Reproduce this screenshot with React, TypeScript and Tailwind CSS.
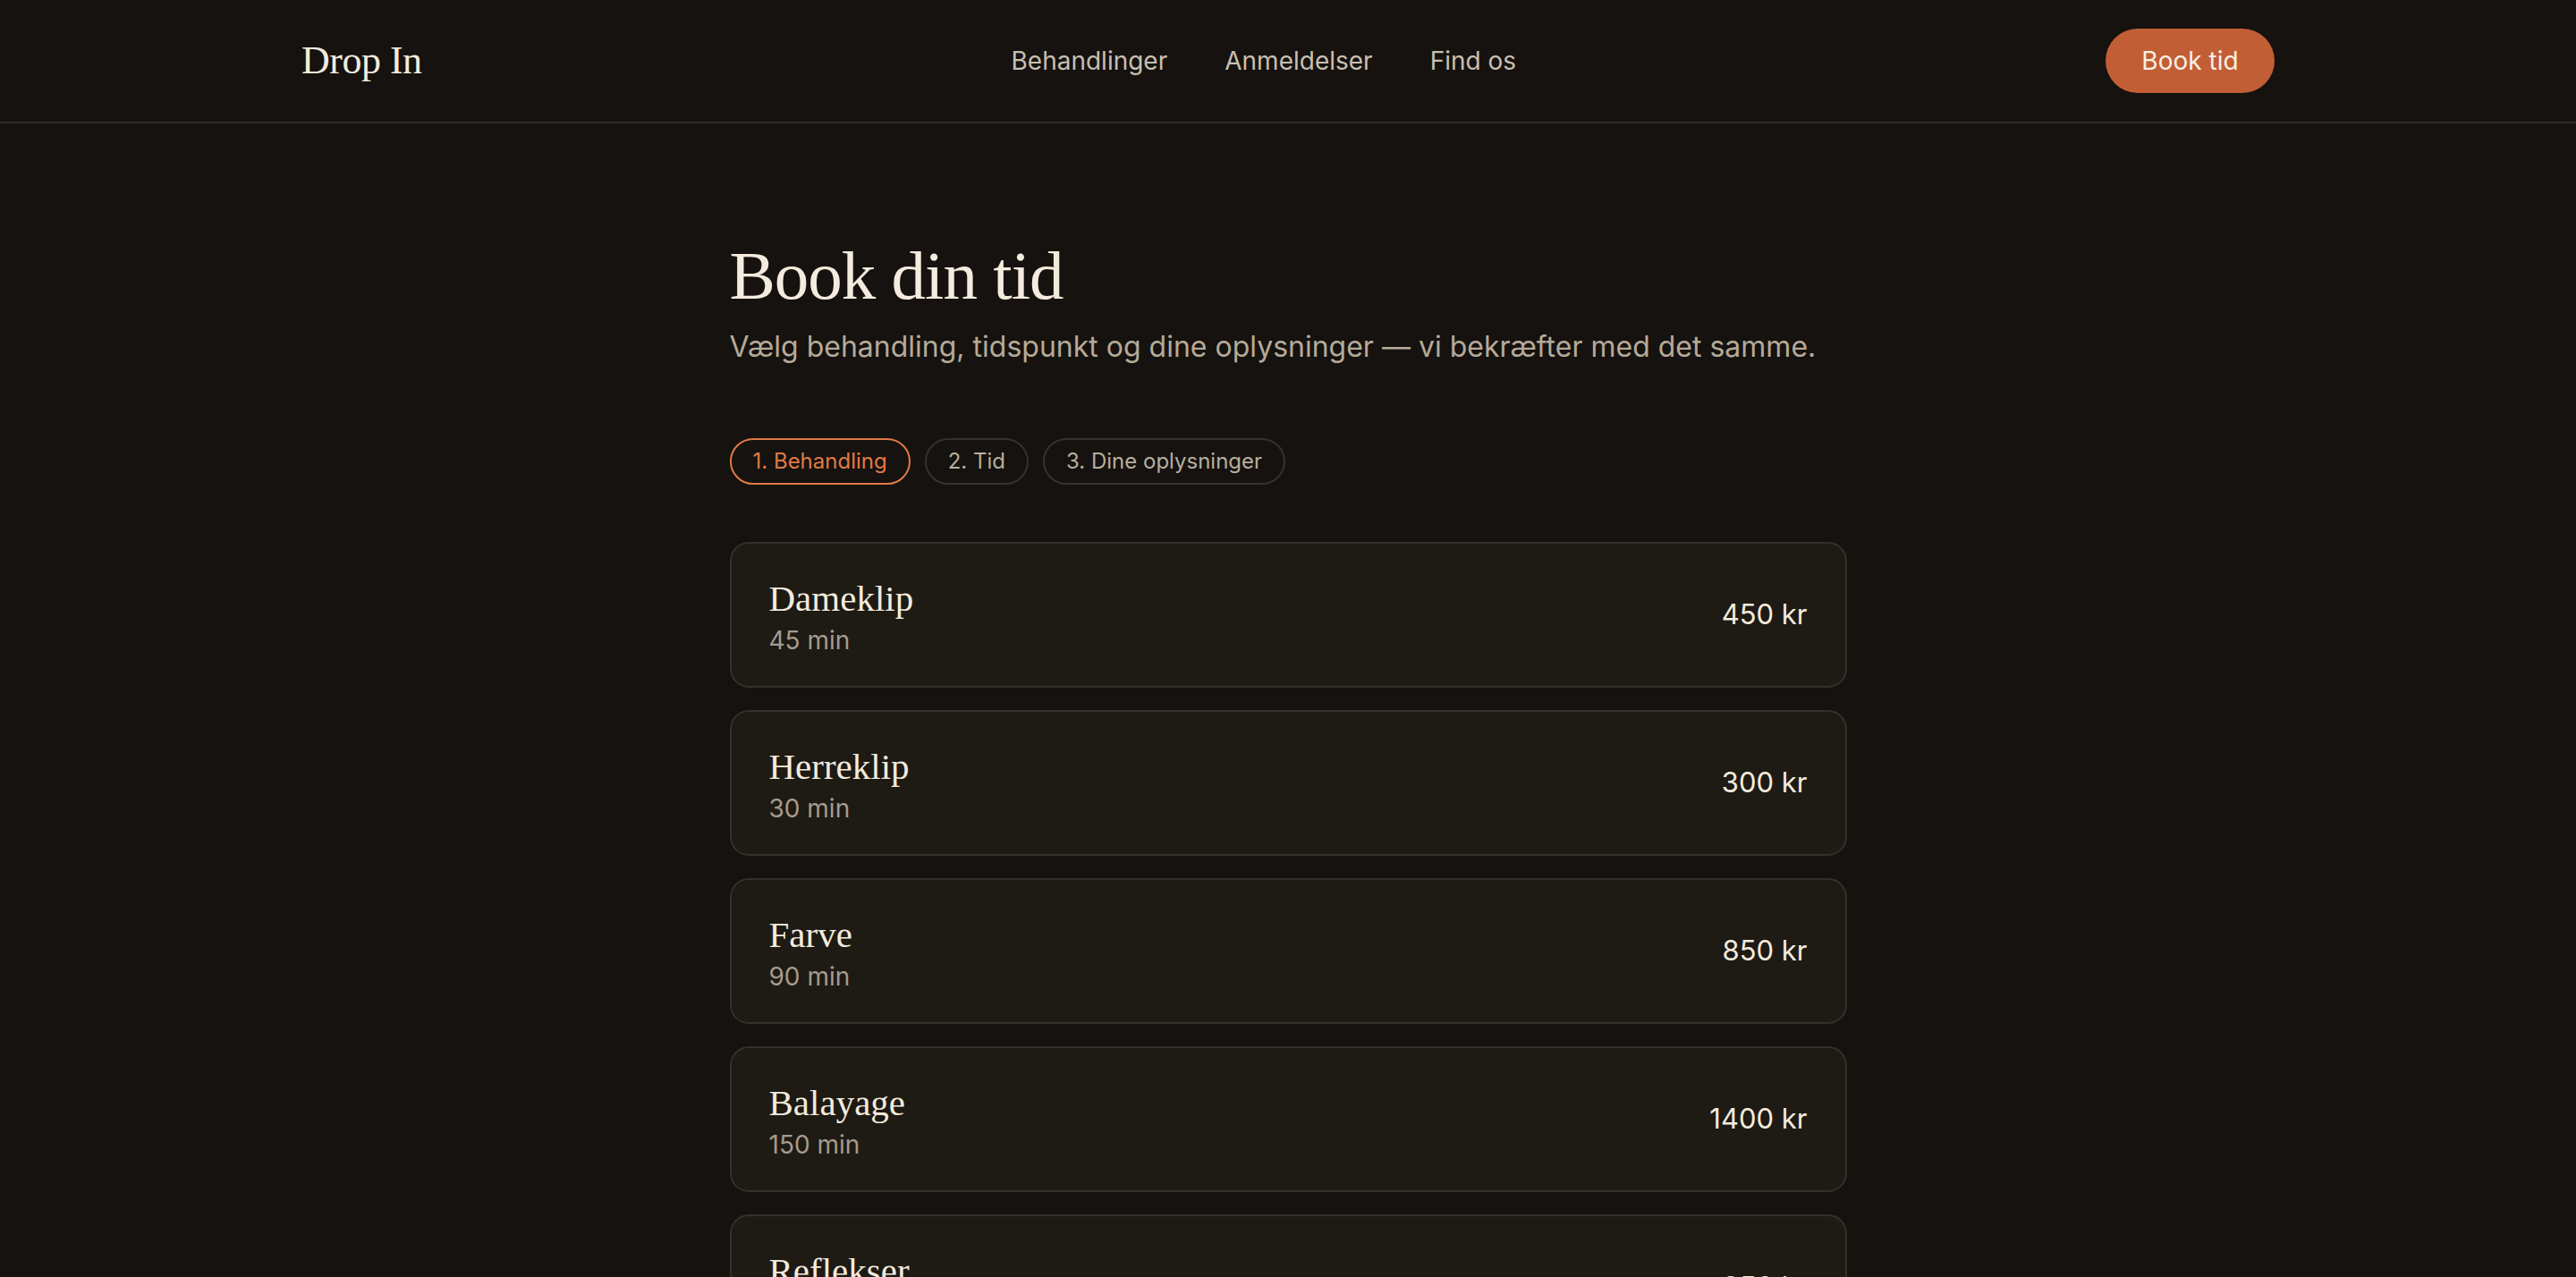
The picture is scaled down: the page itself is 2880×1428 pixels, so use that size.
import React from 'react';

const services = [
  { name: 'Dameklip', duration: '45 min', price: '450 kr' },
  { name: 'Herreklip', duration: '30 min', price: '300 kr' },
  { name: 'Farve', duration: '90 min', price: '850 kr' },
  { name: 'Balayage', duration: '150 min', price: '1400 kr' },
  { name: 'Reflekser', duration: '120 min', price: '950 kr' },
];

const steps = ['1. Behandling', '2. Tid', '3. Dine oplysninger'];

const serif = "font-['Liberation_Serif',Georgia,serif]";
const sans = "font-['Inter','Liberation_Sans',sans-serif]";

const Header = () => (
  <header className="border-b-2 border-[#2e2a25]">
    <div className="mx-auto flex h-[136px] w-[2206px] items-center justify-between">
      <a className={`${serif} text-[44px] tracking-[-0.5px] text-[#f3ebdd]`}>Drop In</a>
      <nav className={`${sans} flex gap-[64px] text-[28px] text-[#c8bfb1]`}>
        <a>Behandlinger</a>
        <a>Anmeldelser</a>
        <a>Find os</a>
      </nav>
      <button className={`${sans} h-[72px] w-[189px] rounded-full bg-[#c25e35] text-[28px] text-[#f8efe4]`}>
        Book tid
      </button>
    </div>
  </header>
);

const ServiceCard = ({ name, duration, price }: { name: string; duration: string; price: string }) => (
  <div className="flex h-[163px] items-center justify-between rounded-[21px] border-2 border-[#34302a] bg-[#1e1a14] px-[42px]">
    <div className="flex flex-col pt-[8px]">
      <span className={`${serif} text-[41px] leading-[48px] text-[#f3ebdd]`}>{name}</span>
      <span className={`${sans} text-[28px] leading-[46px] text-[#a59b8c]`}>{duration}</span>
    </div>
    <span className={`${sans} text-[31px] text-[#f3ebdd]`}>{price}</span>
  </div>
);

export default function App() {
  return (
    <div className="min-h-screen bg-[#15120f]">
      <Header />
      <main className="mx-auto w-[1249px] pt-[124px] pb-[120px]">
        <h1 className={`${serif} text-[77px] leading-[92px] tracking-[-1px] text-[#f3ebdd]`}>Book din tid</h1>
        <p className={`${sans} mt-[10px] text-[32px] text-[#b5aa99]`}>
          Vælg behandling, tidspunkt og dine oplysninger — vi bekræfter med det samme.
        </p>
        <div className={`${sans} mt-[78px] flex gap-[16px]`}>
          {steps.map((s, i) => (
            <span
              key={s}
              className={
                i === 0
                  ? 'flex h-[52px] items-center rounded-full border-2 border-[#e07a45] px-[24px] text-[24px] text-[#e07a45]'
                  : 'flex h-[52px] items-center rounded-full border-2 border-[#36322b] px-[24px] text-[24px] text-[#b8ae9f]'
              }
            >
              {s}
            </span>
          ))}
        </div>
        <div className="mt-[64px] flex flex-col gap-[25px]">
          {services.map((s) => (
            <ServiceCard key={s.name} {...s} />
          ))}
        </div>
      </main>
    </div>
  );
}
